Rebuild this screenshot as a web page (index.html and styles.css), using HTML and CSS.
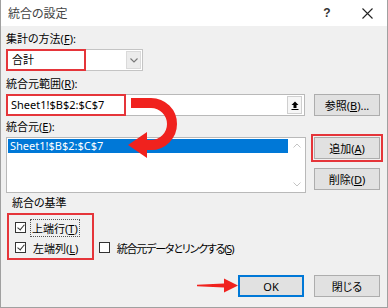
FILE: index.html
```html
<!DOCTYPE html>
<html lang="ja">
<head>
    <meta charset="UTF-8">
    <title>統合の設定</title>
    <link rel="stylesheet" href="styles.css">
</head>
<body>
    <div class="dialog">
        <div class="title-bar">
            <span class="title">統合の設定</span>
            <span class="title-help">?</span>
            <span class="title-close">
                <svg width="11" height="11" viewBox="0 0 11 11"><path d="M0.5 0.5l10 10M10.5 0.5l-10 10" stroke="#222" stroke-width="1.1"/></svg>
            </span>
        </div>

        <div class="content">
            <div class="label">集計の方法(<u>F</u>):</div>
            <div class="combo">
                <span class="combo-text">合計</span>
                <span class="combo-arrow">
                    <svg width="8" height="5" viewBox="0 0 8 5"><path d="M0.5 0.5l3.5 3.5 3.5-3.5" fill="none" stroke="#777" stroke-width="1.1"/></svg>
                </span>
                <span class="mark mark-combo"></span>
            </div>

            <div class="label">統合元範囲(<u>R</u>):</div>
            <div class="row row-ref">
                <div class="ref-input">
                    <span class="ref-text">Sheet1!$B$2:$C$7</span>
                    <span class="ref-btn">
                        <svg width="8" height="9" viewBox="0 0 8 9"><path d="M4 0.5L7.5 4H5.5v3h-3V4H0.5z" fill="#000"/><path d="M0.5 8.5h7" stroke="#000"/></svg>
                    </span>
                    <span class="mark mark-ref"></span>
                </div>
                <button class="btn">参照(<u>B</u>)...</button>
            </div>

            <div class="label">統合元(<u>E</u>):</div>
            <div class="row row-list">
                <div class="listbox">
                    <div class="list-items">
                        <div class="list-item selected">Sheet1!$B$2:$C$7</div>
                    </div>
                    <div class="scrollbar">
                        <svg width="8" height="5" viewBox="0 0 8 5"><path d="M0.5 4.5l3.5-3.5 3.5 3.5" fill="none" stroke="#c4c4c4"/></svg>
                        <svg width="8" height="5" viewBox="0 0 8 5"><path d="M0.5 0.5l3.5 3.5 3.5-3.5" fill="none" stroke="#c4c4c4"/></svg>
                    </div>
                </div>
                <div class="btn-col">
                    <button class="btn btn-marked">追加(<u>A</u>)</button>
                    <button class="btn">削除(<u>D</u>)</button>
                </div>
            </div>

            <div class="group">
                <div class="group-title">統合の基準</div>
                <div class="group-body">
                    <div class="check-col">
                        <label class="check"><span class="box checked"></span><span class="focus">上端行(<u>T</u>)</span></label>
                        <label class="check"><span class="box checked"></span><span class="check-text">左端列(<u>L</u>)</span></label>
                        <span class="mark mark-checks"></span>
                    </div>
                    <label class="check"><span class="box"></span><span class="check-text check-narrow">統合元データとリンクする(<u>S</u>)</span></label>
                </div>
            </div>

            <div class="footer">
                <svg class="arrow-ok" width="42" height="17" viewBox="0 0 42 17"><path d="M0 7.8L27 6.5V1.5l14 7-14 7v-5L0 9.2z" fill="#f0221e"/></svg>
                <button class="btn btn-default">OK</button>
                <button class="btn">閉じる</button>
            </div>
        </div>

        <svg class="arrow-curve" width="64" height="72" viewBox="0 0 64 72">
            <path d="M10 13H30A21 21 0 0 1 30 55H24" fill="none" stroke="#f0221e" stroke-width="10"/>
            <path d="M7 55L26 42V68z" fill="#f0221e"/>
        </svg>
    </div>
</body>
</html>
```

FILE: styles.css
```css
* {
    margin: 0;
    padding: 0;
    box-sizing: border-box;
}

body {
    width: 388px;
    height: 308px;
    overflow: hidden;
    background: #ffffff;
    font-family: "Noto Sans", "Noto Sans CJK JP", sans-serif;
    font-size: 11px;
    font-feature-settings: "palt";
    color: #000;
}

.dialog {
    position: relative;
    width: 388px;
    height: 308px;
    background: #f0f0f0;
    border: 1px solid #a0a0a0;
    border-top: none;
}

.title-bar {
    display: flex;
    align-items: center;
    height: 26px;
    background: #ffffff;
    padding-left: 7px;
}

.title {
    flex: 1;
    font-size: 12px;
    color: #444;
}

.title-help {
    width: 40px;
    text-align: center;
    font-family: "Liberation Sans", sans-serif;
    font-size: 12px;
    font-weight: bold;
    color: #333;
}

.title-close {
    display: flex;
    justify-content: center;
    width: 40px;
}

.content {
    padding: 5px 5px 0 5px;
}

.label {
    height: 16px;
    line-height: 16px;
    margin-bottom: 2px;
}

u {
    text-decoration: underline;
}

.combo {
    position: relative;
    display: flex;
    width: 137px;
    height: 22px;
    background: #fff;
    border: 1px solid #c4c4c4;
    margin-bottom: 5px;
}

.combo-text {
    flex: 1;
    padding-left: 5px;
    line-height: 20px;
}

.combo-arrow {
    display: flex;
    align-items: center;
    justify-content: center;
    width: 15px;
    margin: 1px;
    background: #ececec;
    border: 1px solid #dadada;
}

.mark {
    position: absolute;
    border: 2px solid #e5353a;
    pointer-events: none;
}

.mark-combo {
    left: -1px;
    top: -1px;
    width: 80px;
    height: 22px;
}

.row {
    display: flex;
}

.row-ref {
    gap: 9px;
    margin-bottom: 3px;
}

.row-list {
    gap: 8px;
    margin-bottom: 2px;
}

.ref-input {
    position: relative;
    display: flex;
    width: 299px;
    height: 22px;
    background: #fff;
    border: 1px solid #b9b9b9;
}

.ref-text {
    flex: 1;
    padding-left: 4px;
    line-height: 20px;
}

.ref-btn {
    display: flex;
    align-items: center;
    justify-content: center;
    width: 15px;
    margin: 1px 2px 1px 1px;
    background: #f6f6f6;
    border: 1px solid #cfcfcf;
}

.mark-ref {
    left: -1px;
    top: -1px;
    width: 120px;
    height: 22px;
}

.btn {
    width: 66px;
    height: 22px;
    background: #e1e1e1;
    border: 1px solid #adadad;
    font-family: inherit;
    font-size: 11px;
    font-feature-settings: "palt";
    color: #000;
}

.listbox {
    display: flex;
    width: 300px;
    height: 56px;
    background: #fff;
    border: 1px solid #b9b9b9;
}

.list-items {
    flex: 1;
    padding: 1px 0 0 1px;
}

.list-item {
    height: 14px;
    line-height: 14px;
    padding-left: 2px;
}

.list-item.selected {
    background: #0078d7;
    color: #fff;
}

.scrollbar {
    display: flex;
    flex-direction: column;
    justify-content: space-between;
    align-items: center;
    width: 17px;
    padding: 5px 0;
    background: #fff;
}

.btn-col {
    display: flex;
    flex-direction: column;
    gap: 9px;
}

.btn-marked {
    outline: 2px solid #e5353a;
    outline-offset: 1px;
}

.group-title {
    padding-left: 6px;
    height: 16px;
    line-height: 16px;
}

.group-body {
    display: flex;
    align-items: flex-end;
    gap: 20px;
    padding: 8px 0 0 9px;
}

.check-col {
    position: relative;
    display: flex;
    flex-direction: column;
    gap: 3px;
}

.mark-checks {
    left: -8px;
    top: -6px;
    width: 87px;
    height: 47px;
}

.check {
    display: flex;
    align-items: center;
    gap: 5px;
    height: 17px;
}

.check-text {
    padding-left: 2px;
}

.check-narrow {
    letter-spacing: -1.2px;
}

.box {
    position: relative;
    width: 11px;
    height: 11px;
    background: #fff;
    border: 1px solid #333;
}

.box.checked::after {
    content: "";
    position: absolute;
    left: 2.5px;
    top: 0;
    width: 3px;
    height: 6px;
    border-right: 1.2px solid #333;
    border-bottom: 1.2px solid #333;
    transform: rotate(40deg);
}

.focus {
    padding: 0 1px;
    outline: 1px dotted #555;
}

.footer {
    position: relative;
    display: flex;
    justify-content: flex-end;
    gap: 10px;
    margin-top: 19px;
    padding-right: 2px;
}

.btn-default {
    border: 2px solid #0078d7;
}

.arrow-ok {
    position: absolute;
    left: 191px;
    top: 2px;
}

.arrow-curve {
    position: absolute;
    left: 120px;
    top: 90px;
}
```
